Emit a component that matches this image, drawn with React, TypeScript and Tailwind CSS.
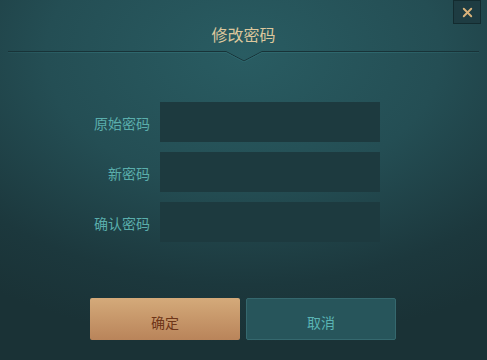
import { X } from 'lucide-react'

const fields = ['原始密码', '新密码', '确认密码']

function Divider() {
  return (
    <div className="mt-[7px] flex items-start px-[8px] h-[11px]">
      <div className="flex-1 h-[2px] border-t border-[#183338] bg-gradient-to-r from-[#2a5e64]/40 via-[#2e676d] to-[#2e676d]" />
      <svg width="36" height="11" viewBox="0 0 36 11" className="block">
        <path d="M0 0.5 L18 10 L36 0.5" fill="none" stroke="#183338" strokeWidth="1" />
        <path d="M0 1.5 L18 11 L36 1.5" fill="none" stroke="#2e676d" strokeWidth="1" />
      </svg>
      <div className="flex-1 h-[2px] border-t border-[#183338] bg-gradient-to-r from-[#2e676d] via-[#2e676d] to-[#2a5e64]/40" />
    </div>
  )
}

export default function App() {
  return (
    <div
      className="relative w-[487px] h-[360px] overflow-hidden bg-[radial-gradient(ellipse_90%_80%_at_50%_15%,#295c62_0%,#244e54_45%,#1c383d_80%,#1a3236_100%)]"
      style={{ fontFamily: '"Noto Sans CJK SC", "Noto Sans", sans-serif' }}
    >
      {/* close button */}
      <button className="absolute top-0 left-[453px] w-[28px] h-[24px] flex items-center justify-center bg-[#1e3c42] border border-[#132b2f]">
        <X className="w-[15px] h-[15px] text-[#d9b27a]" strokeWidth={3} />
      </button>

      <div className="pt-[24px] text-center text-[16px] leading-[20px] text-[#dcc79d]">修改密码</div>
      <Divider />

      <div className="mt-[40px] flex flex-col gap-[10px]">
        {fields.map(label => (
          <div key={label} className="flex items-center gap-[10px]">
            <div className="w-[150px] pt-[2px] text-right text-[14px] leading-[20px] text-[#5aaeac]">{label}</div>
            <div className="w-[220px] h-[40px] bg-[#1d3a3f]" />
          </div>
        ))}
      </div>

      <div className="mt-[56px] ml-[90px] flex gap-[6px]">
        <button className="w-[150px] h-[42px] pt-[7px] rounded-[2px] bg-gradient-to-b from-[#d4aa7a] to-[#b9845a] text-[14px] text-[#6e3518]">
          确定
        </button>
        <button className="w-[150px] h-[42px] pt-[7px] rounded-[2px] bg-[#27555b] border border-[#35686e] text-[14px] text-[#5ab4b4]">
          取消
        </button>
      </div>
    </div>
  )
}
